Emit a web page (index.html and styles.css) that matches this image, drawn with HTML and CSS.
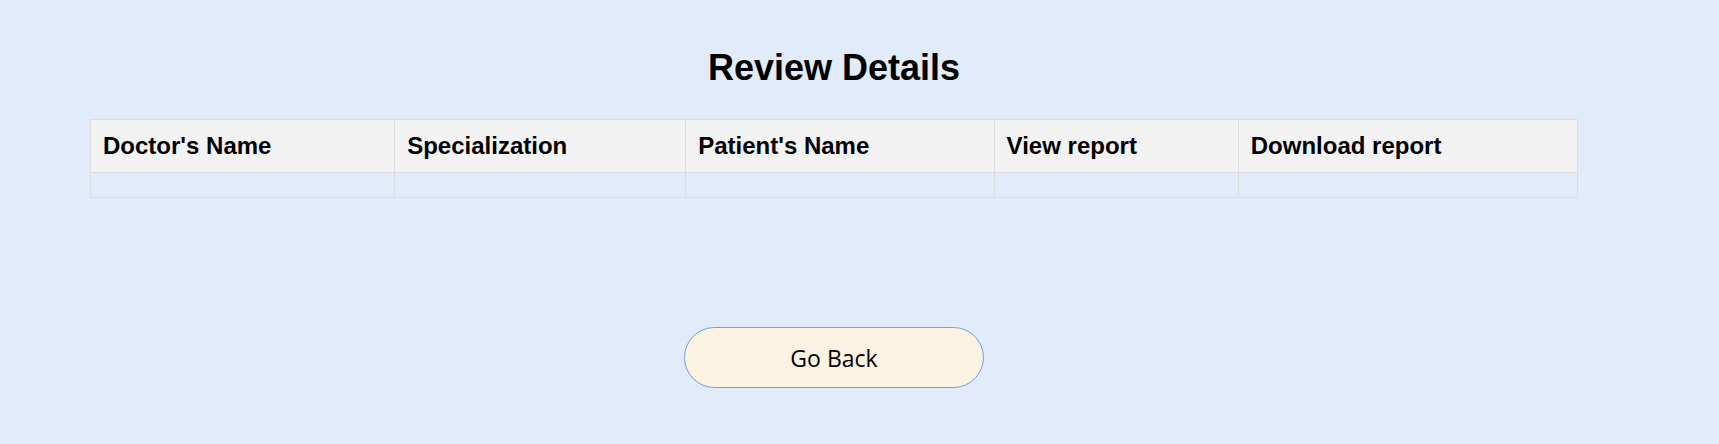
FILE: index.html
```html
<!DOCTYPE html>
<html lang="en">
<head>
<meta charset="utf-8">
<title>Review Details</title>
<link rel="stylesheet" href="styles.css">
</head>
<body>
<div class="page">
  <h1 class="title">Review Details</h1>
  <table class="reviews">
    <thead>
      <tr>
        <th>Doctor's Name</th>
        <th>Specialization</th>
        <th>Patient's Name</th>
        <th>View report</th>
        <th>Download report</th>
      </tr>
    </thead>
    <tbody>
      <tr>
        <td></td>
        <td></td>
        <td></td>
        <td></td>
        <td></td>
      </tr>
    </tbody>
  </table>
  <button class="back-btn" type="button">Go Back</button>
</div>
</body>
</html>
```

FILE: styles.css
```css
html, body {
  margin: 0;
  padding: 0;
  background: #e1ebf9;
}

body {
  font-family: "Liberation Sans", Arial, sans-serif;
  color: #000;
}

.page {
  width: 1652px;
  margin-left: 8px;
  padding-top: 47px;
}

.title {
  margin: 0 0 31px;
  text-align: center;
  font-size: 36px;
  font-weight: bold;
  line-height: 41px;
}

.reviews {
  width: 1488px;
  margin: 0 auto;
  border-collapse: collapse;
}

.reviews th,
.reviews td {
  border: 1px solid #dddddd;
  padding: 12px;
  text-align: left;
}

.reviews th {
  background: #f2f2f2;
  font-size: 24px;
  font-weight: bold;
  line-height: 28px;
}

.back-btn {
  display: block;
  width: 300px;
  height: 61px;
  margin: 129px auto 0;
  border: 1px solid #6fa0e0;
  border-radius: 31px;
  background: #fcf2e2;
  color: #000;
  font-family: "Open Sans", "Noto Sans", sans-serif;
  font-size: 23px;
  cursor: pointer;
}
```
